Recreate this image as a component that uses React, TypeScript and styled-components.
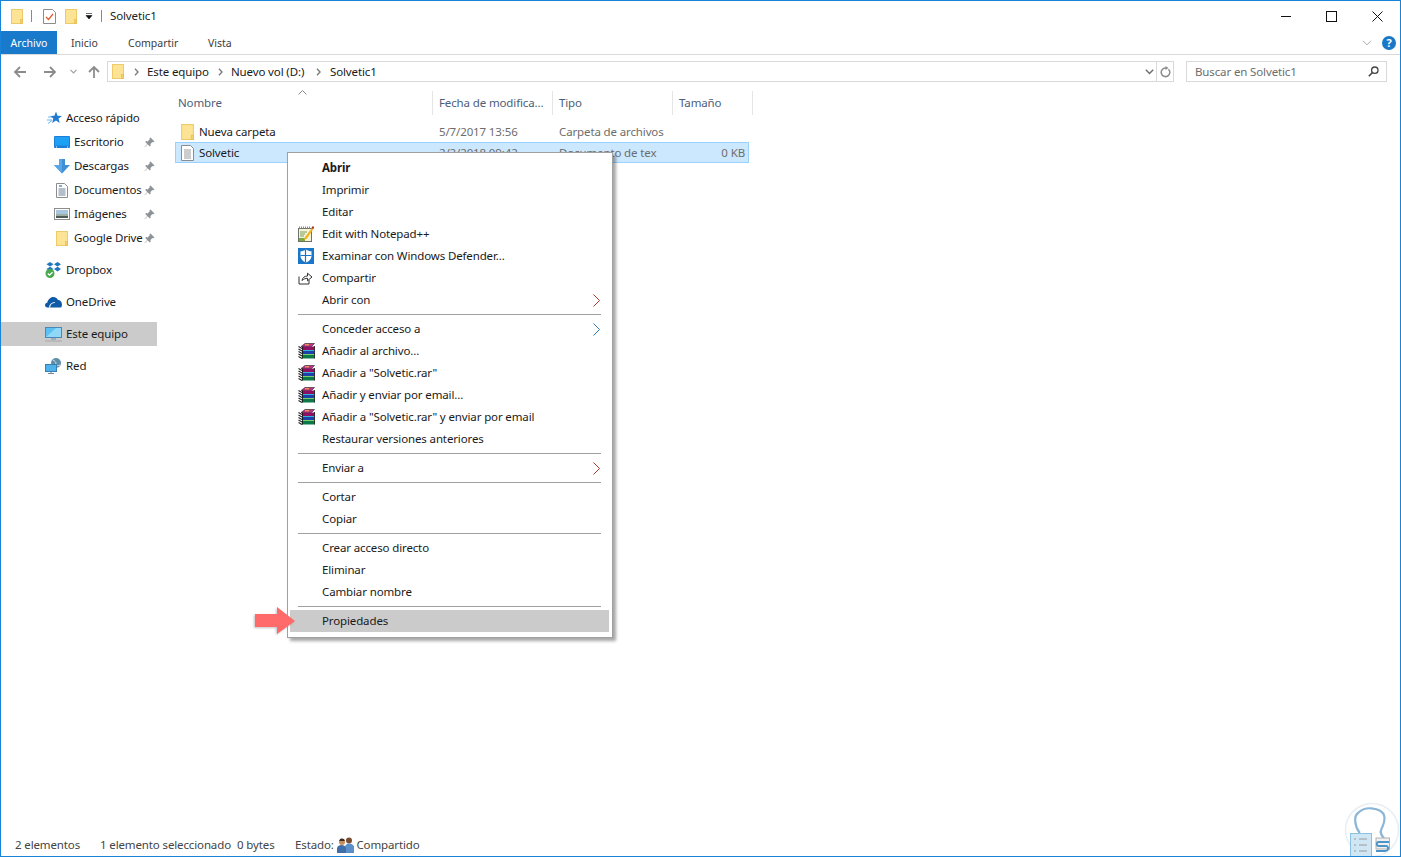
import React from "react";
import styled, { createGlobalStyle } from "styled-components";

const GlobalStyle = createGlobalStyle`
  html, body {
    margin: 0;
    padding: 0;
    background: #fff;
  }
  * {
    box-sizing: border-box;
  }
`;

const Win = styled.div`
  position: relative;
  width: 1401px;
  height: 857px;
  display: flex;
  flex-direction: column;
  overflow: hidden;
  border: 1px solid #1883d7;
  background: #fff;
  color: #1a1a1a;
  font-family: "Noto Sans", "Open Sans", Arial, sans-serif;
  font-size: 11.5px;
  line-height: 16px;
  letter-spacing: -0.13px;
`;

/* title bar */
const TitleBar = styled.div`
  height: 30px;
  flex: none;
  display: flex;
  align-items: center;
  padding-left: 10px;
`;

const QuickSep = styled.span<{ $gap?: number }>`
  width: 1px;
  height: 12px;
  background: #8a8a8a;
  margin: 0 ${(p) => p.$gap ?? 11}px 0 8px;
`;

const QuickGap = styled.span<{ $w: number }>`
  width: ${(p) => p.$w}px;
`;

const TitleText = styled.span`
  color: #222;
  font-size: 11.5px;
`;

const WinControls = styled.div`
  margin-left: auto;
  display: flex;
  align-items: center;
  padding-right: 17px;
  gap: 35px;
`;

/* ribbon tabs */
const Ribbon = styled.div`
  height: 24px;
  flex: none;
  display: flex;
  align-items: stretch;
  border-bottom: 1px solid #dadada;
`;

const FileTab = styled.div`
  width: 56px;
  height: 23px;
  background: #1979ca;
  color: #fff;
  display: flex;
  align-items: center;
  justify-content: center;
  font-size: 10.5px;
  letter-spacing: 0;
  margin-right: 14px;
`;

const Tab = styled.div<{ $w: number }>`
  width: ${(p) => p.$w}px;
  display: flex;
  align-items: center;
  font-size: 10.5px;
  letter-spacing: 0;
  color: #3c3c3c;
`;

const RibbonRight = styled.div`
  margin-left: auto;
  display: flex;
  align-items: center;
  gap: 10px;
  padding-right: 4px;
`;

const Help = styled.span`
  width: 14px;
  height: 14px;
  border-radius: 50%;
  background: #1a78c8;
  color: #fff;
  font-size: 11px;
  font-weight: 700;
  line-height: 14px;
  text-align: center;
`;

/* address row */
const NavRow = styled.div`
  height: 33px;
  flex: none;
  display: flex;
  align-items: flex-start;
  padding: 6px 13px 0 12px;
`;

const NavButtons = styled.div`
  width: 94px;
  height: 21px;
  display: flex;
  align-items: center;
`;

const NavSlot = styled.span<{ $w: number }>`
  width: ${(p) => p.$w}px;
  display: flex;
  align-items: center;
`;

const AddressBox = styled.div`
  width: 1067px;
  height: 21px;
  display: flex;
  align-items: center;
  border: 1px solid #d9d9d9;
  padding-left: 4px;
  color: #1a1a1a;
`;

const Crumb = styled.span<{ $w: number }>`
  width: ${(p) => p.$w}px;
  display: flex;
  align-items: center;
  white-space: nowrap;
`;

const AddressEnd = styled.div`
  margin-left: auto;
  display: flex;
  align-items: center;
  height: 100%;
`;

const RefreshCell = styled.span`
  width: 17px;
  height: 100%;
  margin-left: 2px;
  border-left: 1px solid #d9d9d9;
  display: flex;
  align-items: center;
  justify-content: center;
`;

const SearchBox = styled.div`
  width: 201px;
  height: 21px;
  margin-left: 12px;
  border: 1px solid #d9d9d9;
  display: flex;
  align-items: center;
  justify-content: space-between;
  padding: 0 7px 0 8px;
  color: #6d6d6d;
`;

/* main */
const Main = styled.div`
  flex: 1;
  display: flex;
  min-height: 0;
`;

const Sidebar = styled.nav`
  width: 156px;
  flex: none;
  padding-top: 18px;
`;

const NavItem = styled.div<{ $sub?: boolean; $active?: boolean; $gapTop?: boolean }>`
  position: relative;
  height: 24px;
  display: flex;
  align-items: center;
  margin-top: ${(p) => (p.$gapTop ? 8 : 0)}px;
  padding-left: ${(p) => (p.$sub ? 51 : 43)}px;
  background: ${(p) => (p.$active ? "#cbcbcb" : "transparent")};
  white-space: nowrap;
`;

const NavIcon = styled.span`
  width: 22px;
  height: 16px;
  flex: none;
  padding-left: 1px;
  display: flex;
  align-items: center;
`;

const IconBox = styled.span`
  width: 17px;
  display: flex;
  justify-content: center;
`;

const NavLabel = styled.span`
  width: 69px;
  overflow: hidden;
`;

const PinSlot = styled.span`
  margin-left: 1px;
  display: flex;
  align-items: center;
`;

const Content = styled.section`
  flex: 1;
  padding: 3px 0 0 18px;
  position: relative;
`;

const HeaderRow = styled.div`
  width: 578px;
  height: 24px;
  display: grid;
  grid-template-columns: 258px 120px 120px 80px;
`;

const HeaderCell = styled.div<{ $first?: boolean }>`
  position: relative;
  display: flex;
  align-items: center;
  padding-left: ${(p) => (p.$first ? 3 : 6)}px;
  border-right: 1px solid #e5e5e5;
  color: #4c607a;
  white-space: nowrap;
`;

const SortCaret = styled.svg`
  position: absolute;
  left: 123px;
  top: -1px;
`;

const FileRow = styled.div<{ $selected?: boolean; $first?: boolean }>`
  width: 574px;
  height: 21px;
  margin-top: ${(p) => (p.$first ? 6 : 0)}px;
  display: grid;
  grid-template-columns: 257px 120px 120px 1fr;
  align-items: center;
  border: 1px solid ${(p) => (p.$selected ? "#99d1ff" : "transparent")};
  background: ${(p) => (p.$selected ? "#cce8ff" : "transparent")};
`;

const NameCell = styled.div`
  display: flex;
  align-items: center;
  padding-left: 5px;
  gap: 5px;
  color: #1a1a1a;
`;

const InfoCell = styled.div<{ $right?: boolean }>`
  padding: ${(p) => (p.$right ? "0 3px 0 0" : "0 0 0 6px")};
  text-align: ${(p) => (p.$right ? "right" : "left")};
  color: #6d6d6d;
  white-space: nowrap;
  overflow: hidden;
`;

/* status bar */
const StatusBar = styled.footer`
  height: 22px;
  flex: none;
  display: flex;
  align-items: center;
  padding-left: 14px;
  color: #444;
  white-space: nowrap;
`;

const StatusText = styled.span<{ $w?: number }>`
  display: inline-flex;
  align-items: center;
  width: ${(p) => (p.$w ? `${p.$w}px` : "auto")};
`;

/* context menu */
const Menu = styled.div`
  position: absolute;
  left: 286px;
  top: 151px;
  width: 326px;
  height: 486px;
  background: #fff;
  border: 1px solid #a0a0a0;
  box-shadow: 3px 3px 3px rgba(0, 0, 0, 0.35);
  padding: 4px 2px;
  color: #1a1a1a;
`;

const MenuRow = styled.div<{ $hover?: boolean; $bold?: boolean }>`
  height: 22px;
  width: 319px;
  display: flex;
  align-items: center;
  background: ${(p) => (p.$hover ? "#cbcbcb" : "transparent")};
  font-weight: ${(p) => (p.$bold ? 700 : 400)};
  white-space: nowrap;
`;

const MenuIcon = styled.span`
  width: 32px;
  padding-left: 8px;
  height: 16px;
  flex: none;
  display: flex;
  align-items: center;
`;

const MenuArrow = styled.svg`
  margin-left: auto;
  margin-right: 9px;
`;

const MenuSep = styled.div`
  height: 7px;
  display: flex;
  align-items: center;
  padding: 0 8px;
  width: 319px;
  &::after {
    content: "";
    flex: 1;
    height: 1px;
    background: #a0a0a0;
  }
`;

const Pointer = styled.svg`
  position: absolute;
  left: 251px;
  top: 603px;
  filter: drop-shadow(-1px 1px 1px rgba(120, 120, 120, 0.45));
`;

const Watermark = styled.svg`
  position: absolute;
  right: 0;
  bottom: 0;
`;

/* icons */
const Folder = ({ w = 12, h = 15 }: { w?: number; h?: number }) => (
  <svg width={w} height={h} viewBox="0 0 12 15">
    <rect x="0.5" y="0.5" width="11" height="14" fill="#fde394" stroke="#edcb6a" />
    <rect x="9.5" y="10.5" width="2" height="4" fill="#f4d06f" stroke="#e3b94f" strokeWidth="0.6" />
  </svg>
);

const TextDoc = () => (
  <svg width="13" height="16" viewBox="0 0 13 16">
    <path d="M.5.5h9l3 3v12H.5z" fill="#fff" stroke="#8c8c8c" />
    <path d="M3 5h7M3 7h7M3 9h7M3 11h7M3 13h7" stroke="#9a9a9a" />
  </svg>
);

const Pin = () => (
  <svg width="11" height="11" viewBox="0 0 11 11">
    <path d="M6.500.5l4 4-1 .8-1-.4L6.400 7l.3 1.600-.9.9-2.100-2.200L.8 10.200.5 9.900l2.800-2.900L1.200 5l.9-.9 1.600.3 2.100-2.100-.3-1z" fill="#8d9298" />
  </svg>
);

const Chevron = ({ c = "#7d7d7d" }: { c?: string }) => (
  <svg width="5" height="8" viewBox="0 0 5 8">
    <path d="M1 .8L4 4 1 7.200" fill="none" stroke={c} strokeWidth="1.400" />
  </svg>
);

const ArrowNav = ({ dir }: { dir: "left" | "right" | "up" }) => {
  const r = dir === "left" ? 0 : dir === "right" ? 180 : 90;
  return (
    <svg width="14" height="14" viewBox="0 0 14 14" style={{ transform: `rotate(${r}deg)` }}>
      <path d="M13 7H2M7 2L2 7l5 5" fill="none" stroke="#8c8c8c" strokeWidth="1.800" />
    </svg>
  );
};

const Star = () => (
  <svg width="17" height="15" viewBox="0 0 17 15">
    <path d="M11 .5l1.500 4.200 4.500.2-3.500 2.700L14.700 12 11 9.500 7.200 12l1.100-4.400L5 4.900l4.400-.2z" fill="#1f7ad0" />
    <path d="M3 6h4M2 9h5M3 12.500l4-3" stroke="#66b5ee" strokeWidth="1" />
  </svg>
);

const Desktop = () => (
  <svg width="16" height="13" viewBox="0 0 16 13">
    <rect x="0" y="0" width="16" height="12" rx="1" fill="#1e7fd6" />
    <rect x="1" y="1" width="14" height="8.500" fill="#1ea0f5" />
    <path d="M2 11h1M13 11h1" stroke="#fff" />
  </svg>
);

const Download = () => (
  <svg width="16" height="15" viewBox="0 0 16 15">
    <path d="M5 0h6v6h5l-8 8.500L0 6h5z" fill="#3d8fd6" />
    <path d="M5 0h3v14.500L0 6h5z" fill="#5aa6e4" />
  </svg>
);

const Docs = () => (
  <svg width="12" height="15" viewBox="0 0 12 15">
    <path d="M.5.5h8l3 3v11H.5z" fill="#fff" stroke="#8c8c8c" />
    <path d="M3 3h3" stroke="#3a8fd8" strokeWidth="1.400" />
    <path d="M2.500 6h7M2.500 8h7M2.500 10h7M2.500 12h7" stroke="#6a7f94" />
  </svg>
);

const Pictures = () => (
  <svg width="16" height="12" viewBox="0 0 16 12">
    <rect x=".5" y=".5" width="15" height="11" fill="#fff" stroke="#8c8c8c" />
    <rect x="2" y="2" width="12" height="4" fill="#a9c6e0" />
    <rect x="2" y="6" width="12" height="2" fill="#9eb0a5" />
    <rect x="2" y="8" width="12" height="2" fill="#4e5a58" />
  </svg>
);

const Dropbox = () => (
  <svg width="17" height="16" viewBox="0 0 17 16">
    <path d="M5 0l3.500 2.300L5 4.600 1.500 2.300zM12.500 0L16 2.300l-3.500 2.300L9 2.300zM12.500 4.800L16 7.100l-3.500 2.300L9 7.100zM5 4.800l3.500 2.300L5 9.400 1.500 7.100z" fill="#1f75bf" />
    <circle cx="5" cy="11.500" r="4.500" fill="#4aa84f" />
    <path d="M2.800 11.500l1.700 1.700 3-3" fill="none" stroke="#fff" strokeWidth="1.300" />
  </svg>
);

const Cloud = () => (
  <svg width="17" height="11" viewBox="0 0 17 11">
    <path d="M2.500 10.500C.9 10.500 0 9.400 0 8.100c0-1.300 1-2.300 2.200-2.400C3 2.500 5.500 0 8.300 0c2 0 3.600 1 4.500 2.800 2.400.2 4.200 2.300 4.200 4.600 0 1.200-.3 2.200-1 3.100z" fill="#0f5aa6" />
    <path d="M4.500 10.500c.4-3 2.800-5 5.300-5" fill="none" stroke="#fff" strokeWidth="1.200" />
  </svg>
);

const Monitor = () => (
  <svg width="17" height="15" viewBox="0 0 17 15">
    <rect x=".5" y=".5" width="16" height="10" fill="#5cc0f2" stroke="#4a88b8" />
    <path d="M1 10L11 1h5v9z" fill="#8fd8f8" />
    <path d="M6 12h5" stroke="#8ba4b8" strokeWidth="1.400" />
    <path d="M0 14h17" stroke="#a8a8a8" />
  </svg>
);

const Network = () => (
  <svg width="17" height="16" viewBox="0 0 17 16">
    <circle cx="11" cy="5" r="5" fill="#5e8fa8" />
    <path d="M8 2c2 1 3 2 3 4s2 2 4 1" stroke="#d0e6ef" fill="none" />
    <rect x=".5" y="6.500" width="11" height="7" fill="#4fb2ea" stroke="#3a7fb0" />
    <path d="M6 14v2M3 15.500h6" stroke="#6f8a9c" />
  </svg>
);

const Notepad = () => (
  <svg width="16" height="16" viewBox="0 0 16 16">
    <rect x=".5" y="2.500" width="13" height="13" fill="#f5f2d8" stroke="#70706a" />
    <path d="M1 1.500h12" stroke="#8a8a8a" strokeDasharray="1 1" strokeWidth="2" />
    <path d="M2 6h7M2 8h5M2 10h4" stroke="#7ba05b" />
    <path d="M1 12h6v3H1z" fill="#77ab3f" />
    <path d="M15.500 0L7 11l-1 3 3-1.500L16 2z" fill="#f2b21b" />
    <path d="M15 0l1 2-1 1-1.500-1.500z" fill="#a52a1f" />
  </svg>
);

const Shield = () => (
  <svg width="16" height="16" viewBox="0 0 16 16">
    <rect width="16" height="16" fill="#1a76c9" />
    <path d="M8 1.500c1.700 1.200 3.600 1.700 5.500 1.800v5c0 3-2.400 5-5.500 6.200-3.100-1.200-5.500-3.200-5.500-6.200v-5C4.400 3.200 6.300 2.700 8 1.500z" fill="#fff" />
    <path d="M7.500 1.500v13M2.500 7.500h11" stroke="#1a76c9" strokeWidth="1.200" />
  </svg>
);

const Share = () => (
  <svg width="15" height="14" viewBox="0 0 15 14">
    <path d="M1 5.500v7.500h10V9" fill="none" stroke="#333" />
    <path d="M4 9.500c.5-3 2.800-4.500 5.500-4.500V2.200L14 6l-4.500 3.800V7.300C7.500 7.300 5.800 8 4 9.500z" fill="none" stroke="#333" />
  </svg>
);

const Rar = () => (
  <svg width="17" height="16" viewBox="0 0 17 16">
    <path d="M3 3.500L7 .5h9.500l-3 3z" fill="#c22f86" stroke="#222" strokeWidth=".6" />
    <path d="M7 1.800h4" stroke="#f0c040" strokeWidth="1" />
    <rect x="4" y="3.500" width="12.500" height="3.500" fill="#8f1062" />
    <rect x="4" y="7" width="12.500" height="1" fill="#33b5d8" />
    <rect x="4" y="8" width="12.500" height="3" fill="#1d3fae" />
    <rect x="4" y="11" width="12.500" height="1" fill="#7ad06a" />
    <rect x="4" y="12" width="12.500" height="3.500" fill="#0c7a48" />
    <path d="M4.500 3.500v12M16.500 3v12.500" stroke="#111" strokeWidth=".8" />
    <path d="M.5 3.500l3.500 2M.5 6l3.500 2M.5 8.500l3.500 2M.5 11l3.500 2M.5 13.500l3.500 2" stroke="#222" strokeWidth="1.100" />
  </svg>
);

const People = () => (
  <svg width="17" height="16" viewBox="0 0 17 16">
    <circle cx="12" cy="3.500" r="3" fill="#7a4c30" />
    <path d="M8 16v-6c0-2 2-3.500 4-3.500s5 1.500 5 3.500v6z" fill="#5b8fca" />
    <circle cx="5" cy="5" r="3" fill="#c88d5e" />
    <path d="M2.200 4c.4-2 1.500-2.500 2.800-2.500S7.500 2.200 7.800 4z" fill="#3c2a1f" />
    <path d="M0 16v-4.500c0-2 2-3.500 4.500-3.500S9 9.500 9 11.500V16z" fill="#3f6ea8" />
  </svg>
);

const SubArrow = () => (
  <MenuArrow width="7" height="13" viewBox="0 0 7 13">
    <path d="M.5.5l6 6-6 6" fill="none" stroke="#b1362b" strokeWidth="1" />
  </MenuArrow>
);

const SubArrowBlue = () => (
  <MenuArrow width="7" height="13" viewBox="0 0 7 13">
    <path d="M.5.5l6 6-6 6" fill="none" stroke="#2a7ab8" strokeWidth="1" />
  </MenuArrow>
);

type NavEntry = {
  label: string;
  icon: React.ReactNode;
  sub?: boolean;
  pin?: boolean;
  active?: boolean;
  gapTop?: boolean;
};

const navItems: NavEntry[] = [
  { label: "Acceso rápido", icon: <Star /> },
  { label: "Escritorio", icon: <Desktop />, sub: true, pin: true },
  { label: "Descargas", icon: <Download />, sub: true, pin: true },
  { label: "Documentos", icon: <Docs />, sub: true, pin: true },
  { label: "Imágenes", icon: <Pictures />, sub: true, pin: true },
  { label: "Google Drive", icon: <Folder />, sub: true, pin: true },
  { label: "Dropbox", icon: <Dropbox />, gapTop: true },
  { label: "OneDrive", icon: <Cloud />, gapTop: true },
  { label: "Este equipo", icon: <Monitor />, gapTop: true, active: true },
  { label: "Red", icon: <Network />, gapTop: true },
];

type MenuEntry =
  | "sep"
  | { label: string; icon?: React.ReactNode; bold?: boolean; hover?: boolean; arrow?: "red" | "blue" };

const menuItems: MenuEntry[] = [
  { label: "Abrir", bold: true },
  { label: "Imprimir" },
  { label: "Editar" },
  { label: "Edit with Notepad++", icon: <Notepad /> },
  { label: "Examinar con Windows Defender...", icon: <Shield /> },
  { label: "Compartir", icon: <Share /> },
  { label: "Abrir con", arrow: "red" },
  "sep",
  { label: "Conceder acceso a", arrow: "blue" },
  { label: "Añadir al archivo...", icon: <Rar /> },
  { label: 'Añadir a "Solvetic.rar"', icon: <Rar /> },
  { label: "Añadir y enviar por email...", icon: <Rar /> },
  { label: 'Añadir a "Solvetic.rar" y enviar por email', icon: <Rar /> },
  { label: "Restaurar versiones anteriores" },
  "sep",
  { label: "Enviar a", arrow: "red" },
  "sep",
  { label: "Cortar" },
  { label: "Copiar" },
  "sep",
  { label: "Crear acceso directo" },
  { label: "Eliminar" },
  { label: "Cambiar nombre" },
  "sep",
  { label: "Propiedades", hover: true },
];

export default function App() {
  return (
    <>
      <GlobalStyle />
      <Win>
        <TitleBar>
          <Folder />
          <QuickSep />
          <svg width="13" height="15" viewBox="0 0 13 15">
            <path d="M.5.5h9l3 3v11H.5z" fill="#fff" stroke="#8c8c8c" />
            <path d="M3 8l2.500 2.500L10 5" fill="none" stroke="#e2592a" strokeWidth="1.200" />
          </svg>
          <QuickGap $w={9} />
          <Folder />
          <QuickGap $w={8} />
          <svg width="8" height="8" viewBox="0 0 8 8">
            <path d="M1 1.500h6M1 3.500h6l-3 3.500z" fill="#111" stroke="#111" strokeWidth="0.6" />
          </svg>
          <QuickSep $gap={8} />
          <TitleText>Solvetic1</TitleText>
          <WinControls>
            <svg width="10" height="10" viewBox="0 0 10 10">
              <path d="M0 5.500h10" stroke="#111" />
            </svg>
            <svg width="11" height="11" viewBox="0 0 11 11">
              <rect x=".5" y=".5" width="10" height="10" fill="none" stroke="#111" />
            </svg>
            <svg width="11" height="11" viewBox="0 0 11 11">
              <path d="M.5.5l10 10M10.500.5l-10 10" stroke="#111" />
            </svg>
          </WinControls>
        </TitleBar>

        <Ribbon>
          <FileTab>Archivo</FileTab>
          <Tab $w={57}>Inicio</Tab>
          <Tab $w={80}>Compartir</Tab>
          <Tab $w={40}>Vista</Tab>
          <RibbonRight>
            <svg width="10" height="6" viewBox="0 0 10 6">
              <path d="M1 .8l4 4 4-4" fill="none" stroke="#a8a8a8" />
            </svg>
            <Help>?</Help>
          </RibbonRight>
        </Ribbon>

        <NavRow>
          <NavButtons>
            <NavSlot $w={30}>
              <ArrowNav dir="left" />
            </NavSlot>
            <NavSlot $w={27}>
              <ArrowNav dir="right" />
            </NavSlot>
            <NavSlot $w={17}>
              <svg width="7" height="5" viewBox="0 0 7 5">
                <path d="M.5.800l3 3 3-3" fill="none" stroke="#a0a0a0" strokeWidth="1.200" />
              </svg>
            </NavSlot>
            <NavSlot $w={20}>
              <ArrowNav dir="up" />
            </NavSlot>
          </NavButtons>
          <AddressBox>
            <Crumb $w={22}>
              <Folder />
            </Crumb>
            <Crumb $w={13}>
              <Chevron />
            </Crumb>
            <Crumb $w={71}>Este equipo</Crumb>
            <Crumb $w={13}>
              <Chevron />
            </Crumb>
            <Crumb $w={85}>Nuevo vol (D:)</Crumb>
            <Crumb $w={14}>
              <Chevron />
            </Crumb>
            <Crumb $w={60}>Solvetic1</Crumb>
            <AddressEnd>
              <svg width="9" height="6" viewBox="0 0 9 6">
                <path d="M.8.800L4.500 4.500 8.200.800" fill="none" stroke="#6e6e6e" strokeWidth="1.500" />
              </svg>
              <RefreshCell>
                <svg width="11" height="12" viewBox="0 0 11 12">
                  <path d="M8.500 3.200A4.300 4.300 0 1 1 5.500 2H7" fill="none" stroke="#8c8c8c" strokeWidth="1.500" />
                  <path d="M5.500 0l3 2-3 2z" fill="#8c8c8c" />
                </svg>
              </RefreshCell>
            </AddressEnd>
          </AddressBox>
          <SearchBox>
            <span>Buscar en Solvetic1</span>
            <svg width="11" height="11" viewBox="0 0 11 11">
              <circle cx="6.800" cy="4.200" r="3.200" fill="none" stroke="#444" strokeWidth="1.300" />
              <path d="M4.500 6.500L.8 10.200" stroke="#444" strokeWidth="1.600" />
            </svg>
          </SearchBox>
        </NavRow>

        <Main>
          <Sidebar>
            {navItems.map((item) => (
              <NavItem key={item.label} $sub={item.sub} $active={item.active} $gapTop={item.gapTop}>
                <NavIcon>
                  <IconBox>{item.icon}</IconBox>
                </NavIcon>
                {item.pin ? <NavLabel>{item.label}</NavLabel> : <span>{item.label}</span>}
                {item.pin && (
                  <PinSlot>
                    <Pin />
                  </PinSlot>
                )}
              </NavItem>
            ))}
          </Sidebar>

          <Content>
            <HeaderRow>
              <HeaderCell $first>
                Nombre
                <SortCaret width="9" height="5" viewBox="0 0 9 5">
                  <path d="M.5 4.500l4-4 4 4" fill="none" stroke="#8a8a8a" />
                </SortCaret>
              </HeaderCell>
              <HeaderCell>Fecha de modifica...</HeaderCell>
              <HeaderCell>Tipo</HeaderCell>
              <HeaderCell>Tamaño</HeaderCell>
            </HeaderRow>
            <FileRow $first>
              <NameCell>
                <Folder w={13} h={16} />
                Nueva carpeta
              </NameCell>
              <InfoCell>5/7/2017 13:56</InfoCell>
              <InfoCell>Carpeta de archivos</InfoCell>
              <InfoCell />
            </FileRow>
            <FileRow $selected>
              <NameCell>
                <TextDoc />
                Solvetic
              </NameCell>
              <InfoCell>2/2/2018 09:42</InfoCell>
              <InfoCell>Documento de tex</InfoCell>
              <InfoCell $right>0 KB</InfoCell>
            </FileRow>
          </Content>
        </Main>

        <StatusBar>
          <StatusText $w={85}>2 elementos</StatusText>
          <StatusText $w={137}>1 elemento seleccionado</StatusText>
          <StatusText $w={58}>0 bytes</StatusText>
          <StatusText>
            Estado:&nbsp;
            <People />
            &nbsp;Compartido
          </StatusText>
        </StatusBar>

        <Menu>
          {menuItems.map((item, i) =>
            item === "sep" ? (
              <MenuSep key={i} />
            ) : (
              <MenuRow key={item.label} $bold={item.bold} $hover={item.hover}>
                <MenuIcon>{item.icon}</MenuIcon>
                {item.label}
                {item.arrow === "red" && <SubArrow />}
                {item.arrow === "blue" && <SubArrowBlue />}
              </MenuRow>
            )
          )}
        </Menu>

        <Pointer width="46" height="34" viewBox="0 0 46 34">
          <path d="M3 10h22V3l18 14-18 13v-7H3z" fill="#ff6b6b" />
        </Pointer>

        <Watermark width="56" height="56" viewBox="0 0 56 56">
          <circle cx="28" cy="30" r="26.500" fill="none" stroke="#e8eef3" strokeWidth="1.500" />
          <path d="M15.700 33C10 25 10 16 14 13c4-4 9-5 13.300-4.700 7 .5 12 3 13 8 1 5-1 9-3 13-2 4 1 7 3.500 10" fill="none" stroke="#8cb6d8" strokeWidth="2.200" />
          <rect x="6.500" y="33.500" width="21" height="23" fill="#cfe6f4" stroke="#8cc0e0" />
          <path d="M10 39h2M15 39h8M10 45h2M15 45h8M10 51h2M15 51h8" stroke="#9a9a9a" />
          <rect x="32" y="38" width="13.500" height="11" fill="#f0f0f0" stroke="#b0b0b0" />
          <path d="M45 42H35c-3 0-3 4 0 4h7c3 0 3 5-1 5h-9" fill="none" stroke="#4b93c8" strokeWidth="1.800" />
        </Watermark>
      </Win>
    </>
  );
}
